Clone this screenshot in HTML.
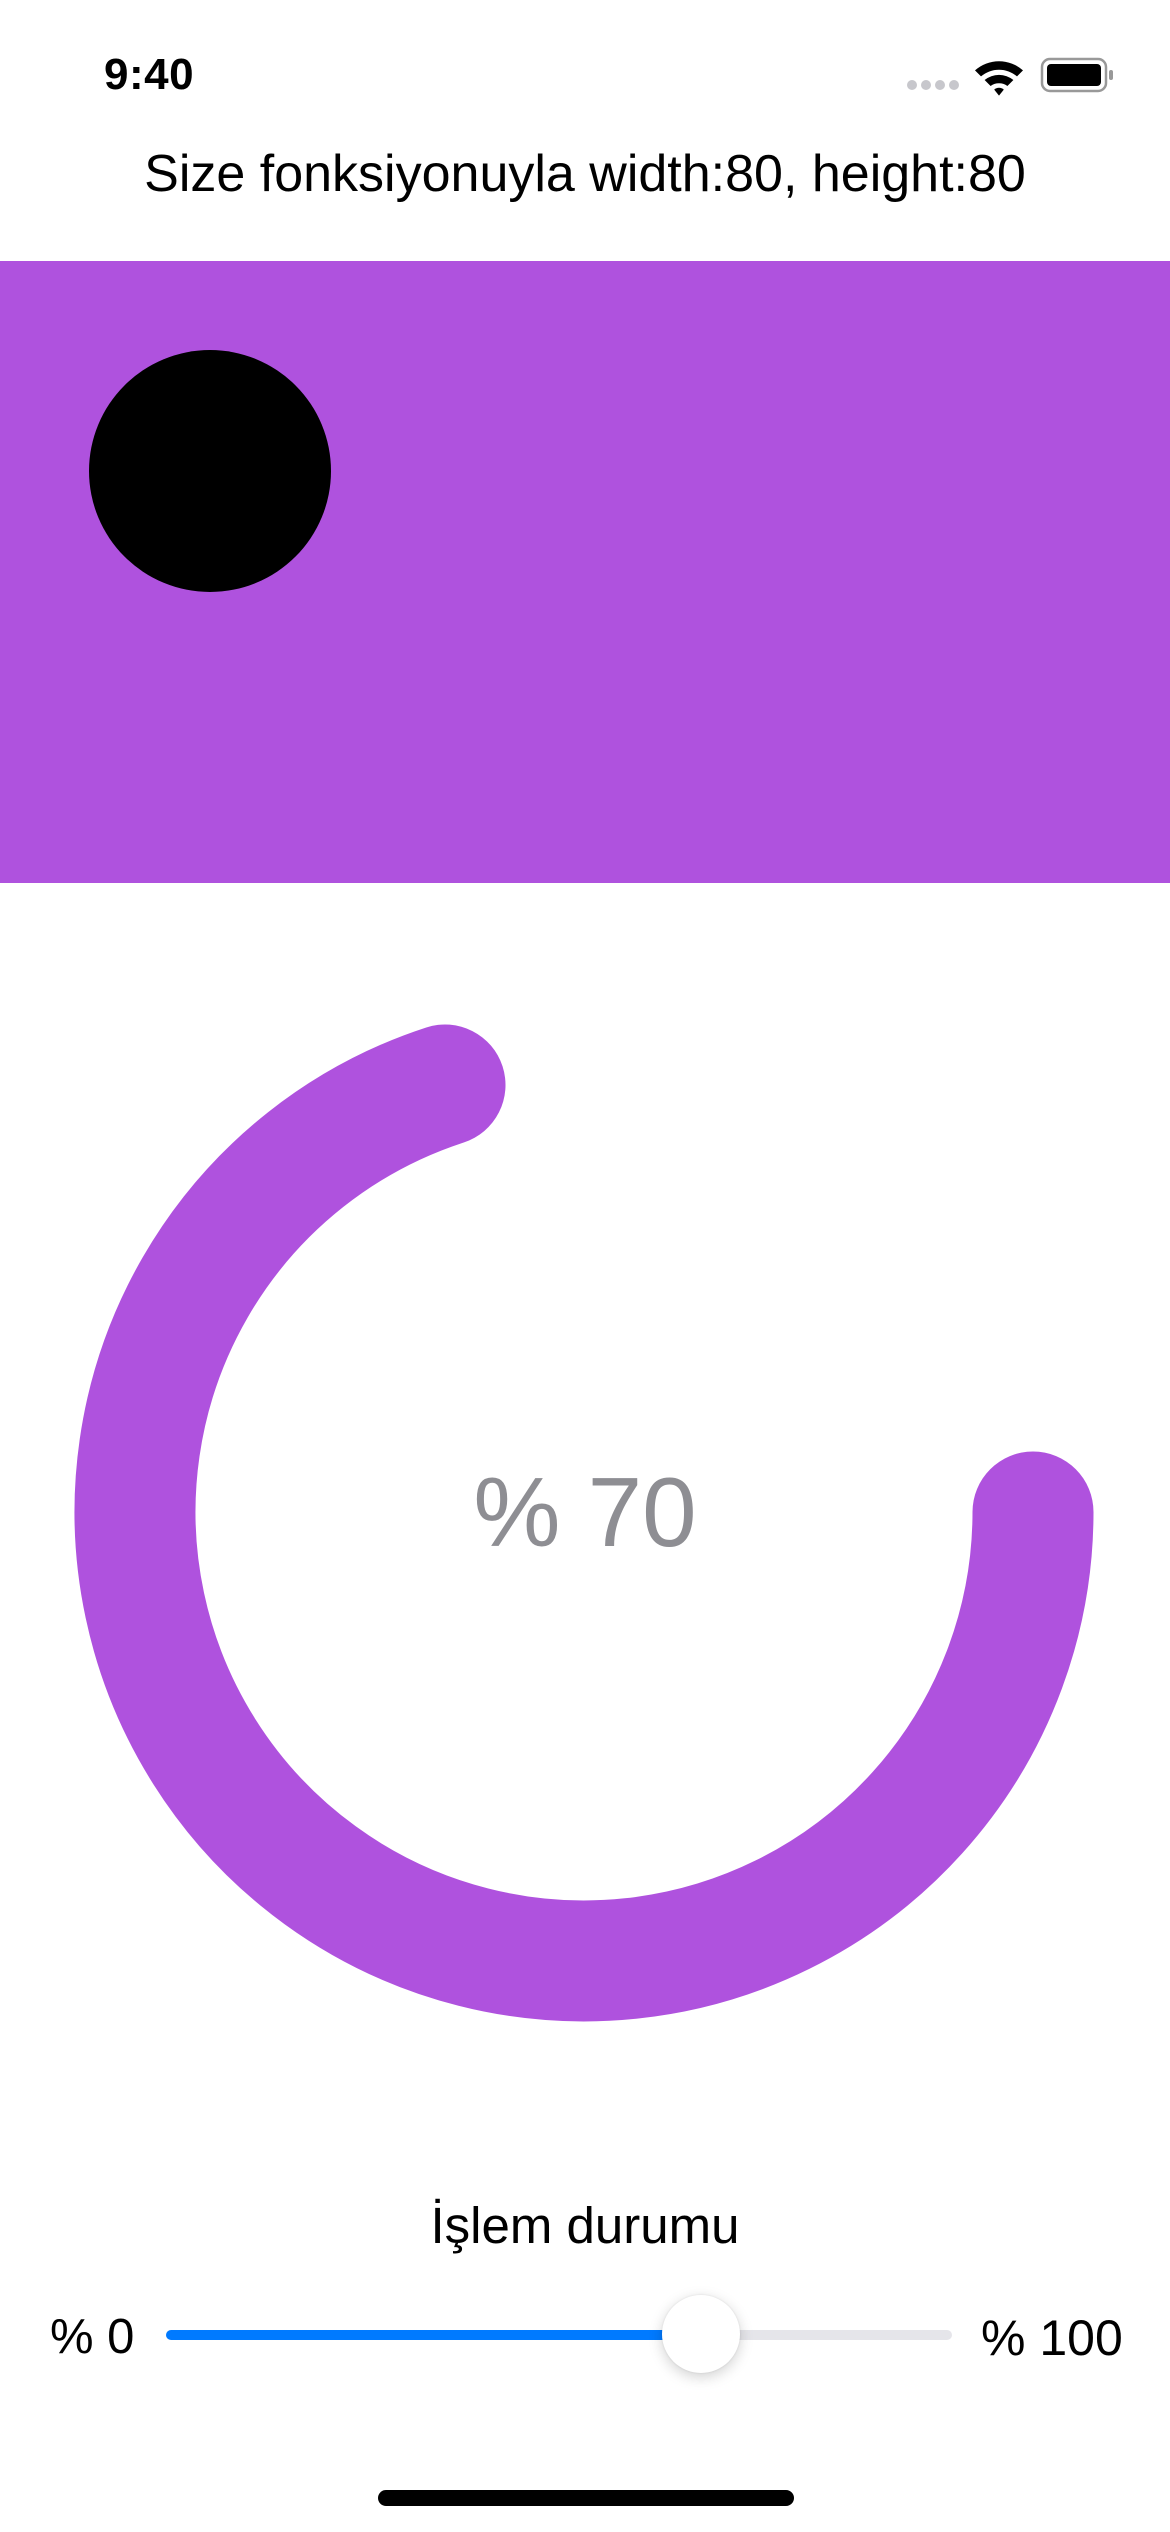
<!DOCTYPE html>
<html><head><meta charset="utf-8"><style>
html,body{margin:0;padding:0;background:#fff;}
body{width:1170px;height:2532px;position:relative;overflow:hidden;font-family:"Liberation Sans",sans-serif;color:#000;}
.abs{position:absolute;}
</style></head><body>
<div class="abs" style="left:104px;top:50px;font-size:44px;font-weight:bold;letter-spacing:0.5px;">9:40</div>
<svg class="abs" style="left:900px;top:50px" width="220" height="46" viewBox="0 0 220 46">
 <g fill="#c7c7cc"><circle cx="12" cy="35" r="5"/><circle cx="26" cy="35" r="5"/><circle cx="40" cy="35" r="5"/><circle cx="54" cy="35" r="5"/></g>
 <g fill="#000" transform="translate(75,6) scale(1.2)">
  <path d="M0 12 A30 30 0 0 1 40 12 L35 17 A23 23 0 0 0 5 17 Z"/>
  <path d="M8 20 A19 19 0 0 1 32 20 L27 25 A12 12 0 0 0 13 25 Z"/>
  <path d="M16 28 A6 6 0 0 1 24 28 L20 33 Z"/>
 </g>
 <rect x="142" y="9" width="64" height="32" rx="8" fill="none" stroke="#999" stroke-width="2.5"/>
 <rect x="147" y="14" width="54" height="22" rx="4" fill="#000"/>
 <rect x="209" y="20" width="4" height="10" rx="2" fill="#999"/>
</svg>
<div class="abs" style="left:0;width:1170px;top:144px;text-align:center;font-size:52px;">Size fonksiyonuyla width:80, height:80</div>
<div class="abs" style="left:0;top:261px;width:1170px;height:622px;background:#AF52DE;"></div>
<div class="abs" style="left:89px;top:350px;width:242px;height:242px;border-radius:50%;background:#000;"></div>
<svg class="abs" style="left:0;top:0" width="1170" height="2532">
 <path d="M1033 1512 A449 449 0 1 1 445 1085" fill="none" stroke="#AF52DE" stroke-width="121" stroke-linecap="round"/>
</svg>
<div class="abs" style="left:0;width:1170px;top:1455px;text-align:center;font-size:98px;color:#8e8e93;line-height:114px;">% 70</div>
<div class="abs" style="left:0;width:1170px;top:2196px;text-align:center;font-size:51px;">İşlem durumu</div>
<div class="abs" style="left:50px;top:2309px;font-size:49px;">% 0</div>
<div class="abs" style="left:981px;top:2309px;font-size:50px;">% 100</div>
<div class="abs" style="left:166px;top:2330px;width:786px;height:10px;border-radius:5px;background:#e5e5ea;"></div>
<div class="abs" style="left:166px;top:2330px;width:536px;height:10px;border-radius:5px;background:#007AFF;"></div>
<div class="abs" style="left:662px;top:2295px;width:78px;height:78px;border-radius:50%;background:#fff;box-shadow:0 4px 14px rgba(0,0,0,0.18),0 0 2px rgba(0,0,0,0.1);"></div>
<div class="abs" style="left:378px;top:2490px;width:416px;height:16px;border-radius:8px;background:#000;"></div>
</body></html>
